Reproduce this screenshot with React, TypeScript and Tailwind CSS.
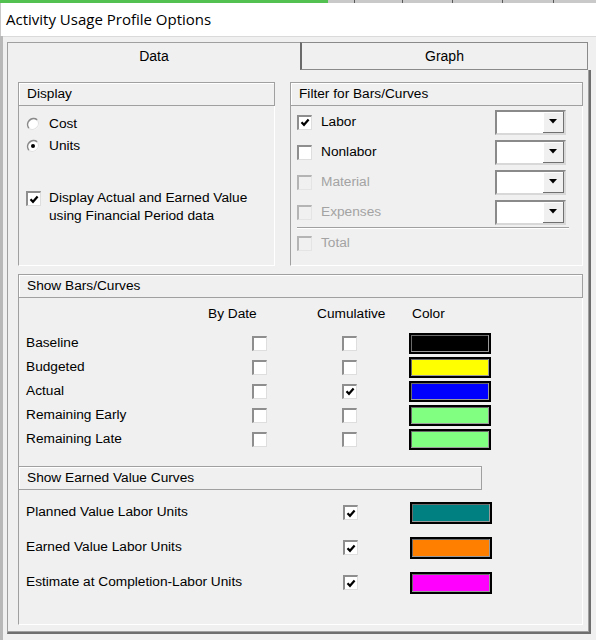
import React from "react";

function Check({ checked = false, disabled = false }: { checked?: boolean; disabled?: boolean }) {
  return (
    <span
      className={
        "flex h-[15px] w-[15px] shrink-0 items-center justify-center border-t-2 border-l-2 border-r border-b " +
        (disabled
          ? "border-t-[#b4b4b4] border-l-[#b4b4b4] border-r-[#e4e4e4] border-b-[#e4e4e4] bg-[#f0f0f0]"
          : "border-t-[#8e8e8e] border-l-[#8e8e8e] border-r-[#dedede] border-b-[#dedede] bg-white")
      }
    >
      {checked && (
        <svg width="10" height="9" viewBox="0 0 10 9">
          <path d="M1.5 4.2 L4 6.8 L8.6 1.6" fill="none" stroke="#000" strokeWidth="2.2" />
        </svg>
      )}
    </span>
  );
}

function Radio({ checked = false }: { checked?: boolean }) {
  return (
    <svg width="14" height="14" viewBox="0 0 14 14" className="shrink-0">
      <circle cx="7" cy="7" r="6" fill="#fff" />
      <path d="M2.8 11.2 A6 6 0 0 1 11.2 2.8" fill="none" stroke="#8a8a8a" strokeWidth="1.6" />
      <path d="M11.2 2.8 A6 6 0 0 1 2.8 11.2" fill="none" stroke="#e2e2e2" strokeWidth="1.2" />
      {checked && <circle cx="7" cy="7" r="2" fill="#000" />}
    </svg>
  );
}

function Dropdown() {
  return (
    <div className="flex h-[25px] w-[71px] border-2 border-t-[#8a8a8a] border-l-[#8a8a8a] border-r-[#d8d8d8] border-b-[#d8d8d8] bg-white">
      <div className="flex-1" />
      <div className="flex w-[21px] items-center justify-center border-r border-b border-[#707070] bg-[#f0f0f0] shadow-[inset_1px_1px_0_#fff]">
        <svg width="8" height="5" viewBox="0 0 8 5">
          <path d="M0 0 H8 L4 4.5 Z" fill="#000" />
        </svg>
      </div>
    </div>
  );
}

function Swatch({ color, tall = false }: { color: string; tall?: boolean }) {
  return (
    <span
      className={
        "block w-[82px] border-2 border-black shadow-[inset_-1px_-1px_0_#9a9a9a,inset_1px_1px_0_#6a6a6a] " +
        (tall ? "h-[22px]" : "h-[21px]")
      }
      style={{ backgroundColor: color }}
    />
  );
}

function GroupHeader({ title, className = "" }: { title: string; className?: string }) {
  return (
    <div
      className={
        "flex h-[24px] items-center border border-[#a0a0a0] pl-[8px] shadow-[inset_1px_1px_0_#fff] " + className
      }
    >
      {title}
    </div>
  );
}

const bars = [
  { label: "Baseline", cumulative: false, color: "#000000" },
  { label: "Budgeted", cumulative: false, color: "#ffff00" },
  { label: "Actual", cumulative: true, color: "#0000ff" },
  { label: "Remaining Early", cumulative: false, color: "#80ff80" },
  { label: "Remaining Late", cumulative: false, color: "#80ff80" },
];

const earned = [
  { label: "Planned Value Labor Units", color: "#008080" },
  { label: "Earned Value Labor Units", color: "#ff8000" },
  { label: "Estimate at Completion-Labor Units", color: "#ff00ff" },
];

const filters = [
  { label: "Labor", checked: true, disabled: false },
  { label: "Nonlabor", checked: false, disabled: false },
  { label: "Material", checked: false, disabled: true },
  { label: "Expenses", checked: false, disabled: true },
];

export default function App() {
  return (
    <div className="h-[640px] w-[596px] overflow-hidden bg-[#f0f0f0] font-['Liberation_Sans',Arial,sans-serif] text-[13.7px] text-black">
      {/* strip of the window behind */}
      <div className="flex h-[3px] bg-[#c9c9c9]">
        <div className="w-[328px] bg-[#52c152]" />
        <div className="w-[26px]" />
        <div className="w-[48px] border-l border-[#5a5a5a]" />
        <div className="w-[50px] border-l border-[#5a5a5a]" />
        <div className="w-[50px] border-l border-[#5a5a5a]" />
        <div className="w-[51px] border-l border-[#5a5a5a]" />
        <div className="flex-1 border-l border-[#5a5a5a]" />
      </div>

      <div className="flex h-[33px] items-center border-l border-[#c8c8c8] bg-white pl-[5px] font-['Open_Sans',sans-serif] text-[15px]">
        Activity Usage Profile Options
      </div>

      <div className="flex h-[604px]">
        <div className="w-[3px] bg-[#b8b8b8]" />
        <div className="flex-1 border-t border-[#dadada] pt-[5px] pl-[4px]">
          {/* tabs */}
          <div className="flex h-[28px]">
            <div className="flex w-[293px] items-center justify-center border-t border-l border-[#a0a0a0] pb-[1px] text-[14px]">
              Data
            </div>
            <div className="flex w-[288px] items-center justify-center border border-l-2 border-[#8a8a8a] border-l-[#6a6a6a] text-[14px]">
              Graph
            </div>
          </div>

          {/* tab page */}
          <div className="h-[564px] w-[584px] border-l border-r-2 border-b-2 border-l-[#a0a0a0] border-r-[#6e6e6e] border-b-[#6e6e6e] pt-[12px] pl-[10px] shadow-[inset_-1px_-1px_0_#a0a0a0]">
            <div className="flex gap-[15px]">
              {/* Display */}
              <div className="w-[257px]">
                <GroupHeader title="Display" />
                <div className="h-[160px] border-l border-r border-b border-l-[#a0a0a0] border-r-white border-b-white pt-[7px] pl-[7px]">
                  <div className="flex h-[22px] items-center gap-[9px]">
                    <Radio />
                    <span>Cost</span>
                  </div>
                  <div className="flex h-[22px] items-center gap-[9px]">
                    <Radio checked />
                    <span>Units</span>
                  </div>
                  <div className="mt-[32px] flex items-start gap-[8px]">
                    <span className="mt-[2px]">
                      <Check checked />
                    </span>
                    <span className="leading-[18px]">
                      Display Actual and Earned Value
                      <br />
                      using Financial Period data
                    </span>
                  </div>
                </div>
              </div>

              {/* Filter */}
              <div className="w-[293px]">
                <GroupHeader title="Filter for Bars/Curves" />
                <div className="h-[160px] border-l border-r border-b border-l-[#a0a0a0] border-r-white border-b-white pt-[1px] pl-[6px]">
                  {filters.map((f) => (
                    <div key={f.label} className="flex h-[30px] items-center">
                      <Check checked={f.checked} disabled={f.disabled} />
                      <span className={"ml-[9px] " + (f.disabled ? "text-[#a3a3a3]" : "")}>{f.label}</span>
                      <div className="mr-[16px] ml-auto">
                        <Dropdown />
                      </div>
                    </div>
                  ))}
                  <div className="mr-[13px] border-t border-b border-t-[#a0a0a0] border-b-white" />
                  <div className="flex h-[29px] items-center">
                    <Check disabled />
                    <span className="ml-[9px] text-[#a3a3a3]">Total</span>
                  </div>
                </div>
              </div>
            </div>

            {/* Show Bars/Curves */}
            <div className="mt-[8px] w-[565px]">
              <GroupHeader title="Show Bars/Curves" />
              <div className="h-[327px] border-l border-r border-b border-l-[#a0a0a0] border-r-white border-b-white pt-[6px] pl-[7px]">
                <div className="flex h-[20px] items-center">
                  <span className="w-[182px]" />
                  <span className="w-[109px]">By Date</span>
                  <span className="w-[95px]">Cumulative</span>
                  <span>Color</span>
                </div>
                <div className="mt-[7px]">
                  {bars.map((b) => (
                    <div key={b.label} className="flex h-[24px] items-center">
                      <span className="w-[226px]">{b.label}</span>
                      <Check />
                      <span className="w-[75px]" />
                      <Check checked={b.cumulative} />
                      <span className="w-[52px]" />
                      <Swatch color={b.color} />
                    </div>
                  ))}
                </div>

                <GroupHeader title="Show Earned Value Curves" className="mt-[15px] -ml-[8px] w-[464px]" />
                <div className="mt-[5px]">
                  {earned.map((e) => (
                    <div key={e.label} className="flex h-[35px] items-center">
                      <span className="w-[317px]">{e.label}</span>
                      <Check checked />
                      <span className="w-[52px]" />
                      <Swatch color={e.color} tall />
                    </div>
                  ))}
                </div>
              </div>
            </div>
          </div>
        </div>
      </div>
    </div>
  );
}
